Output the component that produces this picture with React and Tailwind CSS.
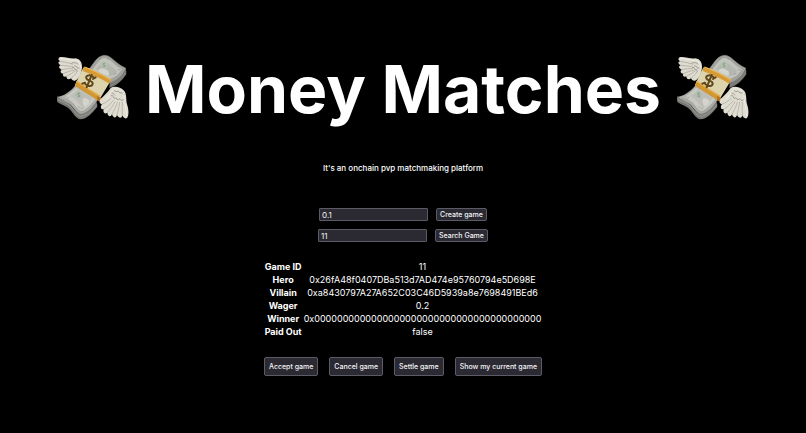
import React, { useState } from "react";

const game = [
  { label: "Game ID", value: "11" },
  { label: "Hero", value: "0x26fA48f0407DBa513d7AD474e95760794e5D698E" },
  { label: "Villain", value: "0xa8430797A27A652C03C46D5939a8e7698491BEd6" },
  { label: "Wager", value: "0.2" },
  { label: "Winner", value: "0x0000000000000000000000000000000000000000" },
  { label: "Paid Out", value: "false" },
];

const actions = ["Accept game", "Cancel game", "Settle game", "Show my current game"];

function FlyingMoney() {
  return (
    <svg viewBox="27 20 228 210" className="w-[76px] h-[70px] shrink-0" aria-hidden="true">
      {/* Stack edges */}
      <path d="M33 154 L34 170 C50 180 64 183 74 195 C83 206 92 222 103 222 C123 221 140 202 154 184 L150 158 L104 204 C90 204 82 188 72 177 C62 166 46 164 33 154Z" fill="#7d7d79" />
      <path d="M34 162 C52 172 66 173 77 187 C87 200 93 213 104 213 C122 212 139 195 153 178" fill="none" stroke="#a3a39e" strokeWidth="2" />
      <path d="M34 167 C52 177 65 179 75 191 C85 203 93 218 104 218" fill="none" stroke="#5f5f5b" strokeWidth="1" />
      <path d="M192 106 C208 102 227 91 240 70 L241 86 C230 105 212 121 190 128Z" fill="#73736f" />
      <path d="M192 113 C210 108 229 96 240 78 M192 120 C210 114 229 102 240 84" fill="none" stroke="#9b9b96" strokeWidth="1.5" />

      {/* Top note */}
      <path d="M33 154 C52 154 73 139 89 119 L157 160 C145 177 128 203 105 206 C91 204 82 187 72 177 C61 168 46 164 33 154Z" fill="#a9a9a4" />
      <path d="M47 155 C63 152 78 140 90 126 L148 161 C137 176 121 194 106 197 C95 194 89 181 79 171 C69 162 58 159 47 155Z" fill="#c9c9c3" />
      <path d="M72 151 C84 147 90 139 96 132 L139 158 C132 169 121 182 111 185 C101 180 94 168 85 160Z" fill="#bdbeb7" />
      <ellipse cx="98" cy="149" rx="11" ry="9" fill="#b3bdae" transform="rotate(35 98 149)" />
      <path d="M102 144 C96 141 92 147 98 149 C104 151 102 156 95 153" fill="none" stroke="#6d8a69" strokeWidth="2" />
      <path d="M113 158 C122 158 132 164 130 171 L119 184 C110 180 107 168 113 158Z" fill="#d4d4cd" />
      <path d="M52 157 L62 153 M61 160 L70 156 M104 191 L112 187 M97 184 L103 187" stroke="#91938b" strokeWidth="2" />
      <path d="M128 73 C141 58 151 34 173 30 C195 28 206 54 240 69 C230 91 211 108 190 111Z" fill="#a3a39e" />
      <path d="M139 73 C151 59 160 41 174 38 C193 38 205 61 228 72 C218 88 205 98 189 101Z" fill="#c3c3bd" />
      <path d="M150 72 C160 60 166 50 177 50 C190 54 199 67 213 76 C207 86 199 92 187 92Z" fill="#b4b7af" />
      <ellipse cx="174" cy="59" rx="12" ry="9" fill="#b5c0b0" transform="rotate(30 174 59)" />
      <path d="M178 54 C171 52 169 58 174 59 C180 61 178 66 170 63" fill="none" stroke="#6c8868" strokeWidth="2" />
      <path d="M157 76 C163 65 179 69 189 80 L188 92 C174 88 164 83 157 76Z" fill="#d5d5cf" />
      <path d="M158 44 L166 37 M183 39 L191 43 M216 73 L224 74 M203 88 L211 83" stroke="#888b83" strokeWidth="2" />
      <path d="M128 73 C141 58 151 34 173 30 C195 28 206 54 240 69" fill="none" stroke="#80807a" strokeWidth="1.5" />

      {/* Paper band */}
      <path d="M114 65 L194 104 L190 113 L158 166 L87 119 C94 106 104 78 114 65Z" fill="#ddd4ae" />
      <path d="M114 64 C140 72 166 86 195 102 L190 115 C164 100 139 87 110 77Z" fill="#d79b35" />
      <path d="M116 65 C141 74 167 87 194 103" fill="none" stroke="#f0bd5c" strokeWidth="3" />
      <path d="M92 106 C115 120 138 136 163 151 L157 166 C134 151 110 136 87 121Z" fill="#d39732" />
      <path d="M91 108 C115 123 138 139 162 154" fill="none" stroke="#edb957" strokeWidth="3" />
      <path d="M154 151 L170 161 L165 170 L153 165Z" fill="#ae741e" />
      <path d="M143 96 C132 86 118 90 121 99 C123 108 139 104 140 114 C141 124 125 126 115 113 M149 96 L141 101 M109 115 L117 112 M137 89 L122 126" fill="none" stroke="#604719" strokeWidth="6" strokeLinecap="round" strokeLinejoin="round" />

      {/* Left wing */}
      <path d="M108 69 C109 52 103 41 88 39 C75 42 59 34 44 35 C35 37 36 44 43 48 C35 49 36 56 44 60 C36 63 39 70 47 73 C41 78 44 84 52 85 C48 91 54 96 61 93 C61 101 68 105 75 99 C79 108 88 109 94 101 C101 95 106 82 108 69Z" fill="#dedbd0" />
      <path d="M43 48 C57 50 69 53 81 57 M44 60 C58 61 69 62 80 65 M47 73 C61 70 70 70 81 70 M52 85 C64 80 73 76 84 75 M61 93 C71 88 80 83 89 76 M75 99 C83 92 90 85 94 78" fill="none" stroke="#a7a195" strokeWidth="2" />
      <path d="M76 54 C83 50 92 52 97 57 M78 65 L84 67 L86 72 L92 73 L94 79 M84 61 L91 63 L94 68 L101 68" fill="none" stroke="#898478" strokeWidth="2" />
      <path d="M43 39 C59 39 73 46 89 44 C100 47 104 58 103 67" fill="none" stroke="#f0ede4" strokeWidth="3" />

      {/* Right wing */}
      <path d="M164 161 C175 150 187 139 194 128 C205 121 223 125 235 137 C242 147 240 159 242 173 C248 190 250 210 243 218 C237 222 232 216 229 210 C228 220 218 219 213 209 C210 220 201 218 198 207 C194 217 185 213 184 202 C176 208 170 201 173 191 C164 194 162 184 168 176 C161 176 158 169 164 161Z" fill="#dfdcd1" />
      <path d="M168 176 C179 174 187 165 196 159 M173 191 C184 187 194 175 202 165 M184 202 C192 193 201 182 207 169 M198 207 C204 195 212 181 214 170 M213 209 C216 195 220 182 221 170 M229 210 C228 196 229 183 229 170" fill="none" stroke="#aaa398" strokeWidth="2" />
      <path d="M203 135 L210 139 L216 137 L222 143 L230 142 L236 150 M194 151 L200 151 L204 159 L211 158 L215 164 L222 160 L227 166 L235 162 M195 142 L202 144 L207 150" fill="none" stroke="#898478" strokeWidth="2" />
      <path d="M181 160 C190 151 195 138 205 131 C219 126 233 138 234 150 C233 164 237 176 240 193 L242 211" fill="none" stroke="#eeebe2" strokeWidth="3" />
    </svg>
  );
}

function Button({ children, tall }) {
  return (
    <button
      type="button"
      className={`${tall ? "h-[19px] px-[4px]" : "h-[13px] px-[3px]"} flex items-center rounded-[2px] border border-[#5b5b66] bg-[#2b2a33] text-[7px] leading-none font-medium text-[#f4f4f6] whitespace-nowrap`}
    >
      {children}
    </button>
  );
}

function GameForm({ label, action, value, onChange }) {
  return (
    <form className="flex items-center gap-2" onSubmit={(e) => e.preventDefault()}>
      <input
        type="text"
        aria-label={label}
        value={value}
        onChange={(e) => onChange(e.target.value)}
        className="w-[109px] h-[13px] px-[2px] rounded-[1px] border border-[#5b5b66] bg-[#2b2a33] text-[8px] leading-none text-[#f4f4f6]"
      />
      <Button>{action}</Button>
    </form>
  );
}

export default function App() {
  const [wager, setWager] = useState("0.1");
  const [gameId, setGameId] = useState("11");

  return (
    <main className="min-h-screen w-full bg-black text-white font-['Inter',sans-serif] flex flex-col items-center pt-[52px] pb-8">
      <header className="flex flex-col items-center">
        <div className="flex items-start gap-[14px]">
          <FlyingMoney />
          <h1 className="text-[66px] leading-[74px] font-bold whitespace-nowrap">Money Matches</h1>
          <FlyingMoney />
        </div>
        <p className="mt-9 text-[8px] leading-3 font-medium">It's an onchain pvp matchmaking platform</p>
      </header>

      <section className="mt-[34px] flex flex-col items-center gap-2">
        <GameForm label="Wager" action="Create game" value={wager} onChange={setWager} />
        <GameForm label="Game ID" action="Search Game" value={gameId} onChange={setGameId} />
      </section>

      <table className="mt-[18px] text-[9px] leading-[13px] text-center">
        <tbody>
          {game.map((row) => (
            <tr key={row.label}>
              <th scope="row" className="p-0 pr-[2px] font-bold">{row.label}</th>
              <td className="p-0">{row.value}</td>
            </tr>
          ))}
        </tbody>
      </table>

      <div className="mt-[19px] flex gap-[11px]">
        {actions.map((action) => (
          <Button key={action} tall>{action}</Button>
        ))}
      </div>
    </main>
  );
}
